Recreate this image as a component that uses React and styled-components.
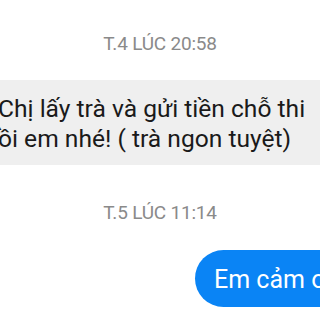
import React from "react";
import styled, { createGlobalStyle } from "styled-components";

const Global = createGlobalStyle`
  html, body { margin: 0; padding: 0; background: #ffffff; }
  body { font-family: Roboto, "Noto Sans", "Liberation Sans", sans-serif; }
`;

const Thread = styled.div`
  width: 320px;
  height: 320px;
  overflow: hidden;
  display: flex;
  flex-direction: column;
  background: #ffffff;
`;

const Stamp = styled.div`
  margin-top: ${(p) => p.$top}px;
  text-align: center;
  font-size: 19px;
  line-height: 24px;
  color: #8a8a8a;
  letter-spacing: -0.2px;
`;

const IncomingRow = styled.div`
  margin-top: ${(p) => p.$top}px;
  display: flex;
  overflow: hidden;
`;

const IncomingBubble = styled.div`
  flex: 1;
  background: #efefef;
  padding: 14px 0 11px 0;
  margin-left: -2px;
  font-size: 24.6px;
  line-height: 30px;
  color: #1a1a1a;
  white-space: nowrap;
`;

const OutgoingRow = styled.div`
  margin-top: ${(p) => p.$top}px;
  display: flex;
  padding-left: 195px;
  overflow: hidden;
`;

const OutgoingBubble = styled.div`
  flex: none;
  background: #0a84f5;
  color: #ffffff;
  border-radius: 29px;
  height: 57px;
  box-sizing: border-box;
  padding: 2px 22px 0 19px;
  font-size: 25px;
  line-height: 55px;
  white-space: nowrap;
`;

export default function App() {
  return (
    <>
      <Global />
      <Thread>
        <Stamp $top={32}>T.4 LÚC 20:58</Stamp>
        <IncomingRow $top={24}>
          <IncomingBubble>
            Chị lấy trà và gửi tiền chỗ thi
            <br />
            ồi em nhé! ( trà ngon tuyệt)
          </IncomingBubble>
        </IncomingRow>
        <Stamp $top={36}>T.5 LÚC 11:14</Stamp>
        <OutgoingRow $top={25}>
          <OutgoingBubble>Em cảm ơn chị nhiều ạ</OutgoingBubble>
        </OutgoingRow>
      </Thread>
    </>
  );
}
